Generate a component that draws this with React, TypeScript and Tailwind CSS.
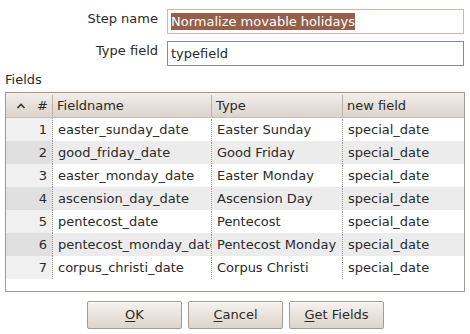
import React from 'react'

const rows = [
  ['1', 'easter_sunday_date', 'Easter Sunday', 'special_date'],
  ['2', 'good_friday_date', 'Good Friday', 'special_date'],
  ['3', 'easter_monday_date', 'Easter Monday', 'special_date'],
  ['4', 'ascension_day_date', 'Ascension Day', 'special_date'],
  ['5', 'pentecost_date', 'Pentecost', 'special_date'],
  ['6', 'pentecost_monday_date', 'Pentecost Monday', 'special_date'],
  ['7', 'corpus_christi_date', 'Corpus Christi', 'special_date'],
]

const cols = 'grid grid-cols-[47px_159px_131px_1fr]'

function Btn({ mn, rest }: { mn: string; rest: string }) {
  return (
    <button className="w-[95px] h-[28px] border border-[#a39a92] rounded-[2px] bg-gradient-to-b from-[#f6f2ee] to-[#ddd4cb] text-[13px] text-[#2a2a2a] shadow-[inset_0_1px_0_#fff]">
      <span className="underline underline-offset-2">{mn}</span>
      {rest}
    </button>
  )
}

export default function App() {
  return (
    <div className="w-[470px] h-[334px] bg-white font-['DejaVu_Sans',sans-serif] text-[13px] text-[#2a2a2a] overflow-hidden">
      {/* form fields */}
      <div className="flex items-start pt-[9px]">
        <div className="w-[158px] text-right">Step name</div>
        <div className="ml-[9px] w-[297px] h-[25px] border border-[#dfb1a0] flex items-center px-[3px]">
          <span className="bg-[#955f4b] text-white leading-[17px]">Normalize movable holidays</span>
        </div>
      </div>
      <div className="flex items-start pt-[7px]">
        <div className="w-[158px] text-right">Type field</div>
        <div className="ml-[9px] w-[297px] h-[25px] border border-[#8f8a86] flex items-center px-[3px]">
          typefield
        </div>
      </div>
      <div className="pl-[5px] pt-[4px] h-[26px]">Fields</div>

      {/* table */}
      <div className="ml-[5px] w-[460px] h-[200px] border border-[#a09a95] bg-white overflow-hidden">
        <div className={`${cols} h-[25px] pt-[2px] bg-gradient-to-b from-[#f2eeea] to-[#dcd4cc] border-b border-[#c9bfb5]`}>
          <div className="flex items-center justify-between pl-[10px] pr-[4px] border-r border-[#bdb3a9]">
            <svg width="10" height="8" viewBox="0 0 10 8">
              <path d="M1.5 6 L5 2.5 L8.5 6" fill="none" stroke="#333" strokeWidth="1.6" />
            </svg>
            <span>#</span>
          </div>
          <div className="flex items-center pl-[4px] border-r border-[#bdb3a9]">Fieldname</div>
          <div className="flex items-center pl-[4px] border-r border-[#bdb3a9]">Type</div>
          <div className="flex items-center pl-[4px]">new field</div>
        </div>
        {rows.map((r, i) => (
          <div key={r[0]} className={`${cols} h-[23px] pt-[1px] ${i % 2 ? 'bg-[#ececec]' : 'bg-white'}`}>
            <div className={`flex items-center justify-end pr-[5px] -mt-[1px] pt-[1px] border-r border-dotted border-[#9a9a9a] ${i % 2 ? 'bg-[#e0e0e0]' : 'bg-[#f0f0f0]'}`}>
              {r[0]}
            </div>
            <div className="flex items-center pl-[5px] border-r border-dotted border-[#9a9a9a] whitespace-nowrap overflow-hidden">
              {r[1]}
            </div>
            <div className="flex items-center pl-[5px] border-r border-dotted border-[#9a9a9a] whitespace-nowrap overflow-hidden">
              {r[2]}
            </div>
            <div className="flex items-center pl-[5px] whitespace-nowrap">{r[3]}</div>
          </div>
        ))}
      </div>

      {/* buttons */}
      <div className="flex justify-center gap-[6px] pt-[9px] pl-[1px]">
        <Btn mn="O" rest="K" />
        <Btn mn="C" rest="ancel" />
        <Btn mn="G" rest="et Fields" />
      </div>
    </div>
  )
}
